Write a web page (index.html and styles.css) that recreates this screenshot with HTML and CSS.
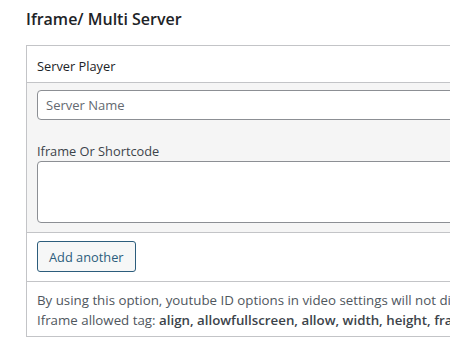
FILE: index.html
```html
<!DOCTYPE html>
<html lang="en">
<head>
    <meta charset="UTF-8">
    <meta name="viewport" content="width=device-width, initial-scale=1.0">
    <title>Iframe/ Multi Server</title>
    <link rel="stylesheet" href="styles.css">
</head>
<body>
<div class="wrap">
    <h2 class="title">Iframe/ Multi Server</h2>
    <div class="box">
        <div class="box-head">Server Player</div>
        <div class="repeater">
            <input type="text" class="field" placeholder="Server Name">
            <label class="label">Iframe Or Shortcode</label>
            <textarea class="field area"></textarea>
        </div>
        <div class="actions">
            <button type="button" class="btn">Add another</button>
        </div>
        <div class="help">
            <p>By using this option, youtube ID options in video settings will not display</p>
            <p>Iframe allowed tag: <b>align, allowfullscreen, allow, width, height, frameborder</b></p>
        </div>
    </div>
</div>
</body>
</html>
```

FILE: styles.css
```css
body {
    margin: 0;
    background: #fff;
    font-family: "Open Sans", Arial, sans-serif;
    color: #3c434a;
    overflow: hidden;
}
.wrap {
    padding: 8px 0 0 26px;
}
.title {
    margin: 0 0 15px;
    font-size: 16px;
    font-weight: 600;
    color: #1d2327;
    line-height: 22px;
}
.box {
    width: 520px;
    border: 1px solid #c3c4c7;
}
.box-head {
    box-sizing: border-box;
    height: 37px;
    padding: 11px 0 0 10px;
    font-size: 12.8px;
    line-height: 18px;
    color: #1d2327;
    border-bottom: 1px solid #c3c4c7;
}
.repeater {
    background: #f5f5f5;
    padding: 7px 10px 9px;
    border-bottom: 1px solid #c3c4c7;
}
.field {
    display: block;
    box-sizing: border-box;
    width: 100%;
    border: 1px solid #8c8f94;
    border-radius: 4px;
    background: #fff;
    font-family: inherit;
    font-size: 13px;
    color: #2c3338;
    margin: 0;
}
input.field {
    height: 30px;
    padding: 0 8px;
}
.field::placeholder {
    color: #646970;
}
.label {
    display: block;
    margin: 22px 0 1px;
    font-size: 12.8px;
    line-height: 18px;
    color: #3c434a;
}
.area {
    height: 62px;
    resize: none;
}
.actions {
    padding: 8px 10px 9px;
    border-bottom: 1px solid #c3c4c7;
}
.btn {
    display: block;
    height: 31px;
    padding: 0 11px;
    background: #f6f7f7;
    border: 1px solid #2c5d7c;
    border-radius: 3px;
    color: #2c5d7c;
    font-family: inherit;
    font-size: 12.8px;
    cursor: pointer;
}
.help {
    padding: 8px 10px 6px;
    font-size: 13.3px;
    line-height: 20px;
    color: #50575e;
}
.help p {
    margin: 0;
    white-space: nowrap;
}
.help b {
    font-weight: 600;
    color: #3c434a;
}
```
